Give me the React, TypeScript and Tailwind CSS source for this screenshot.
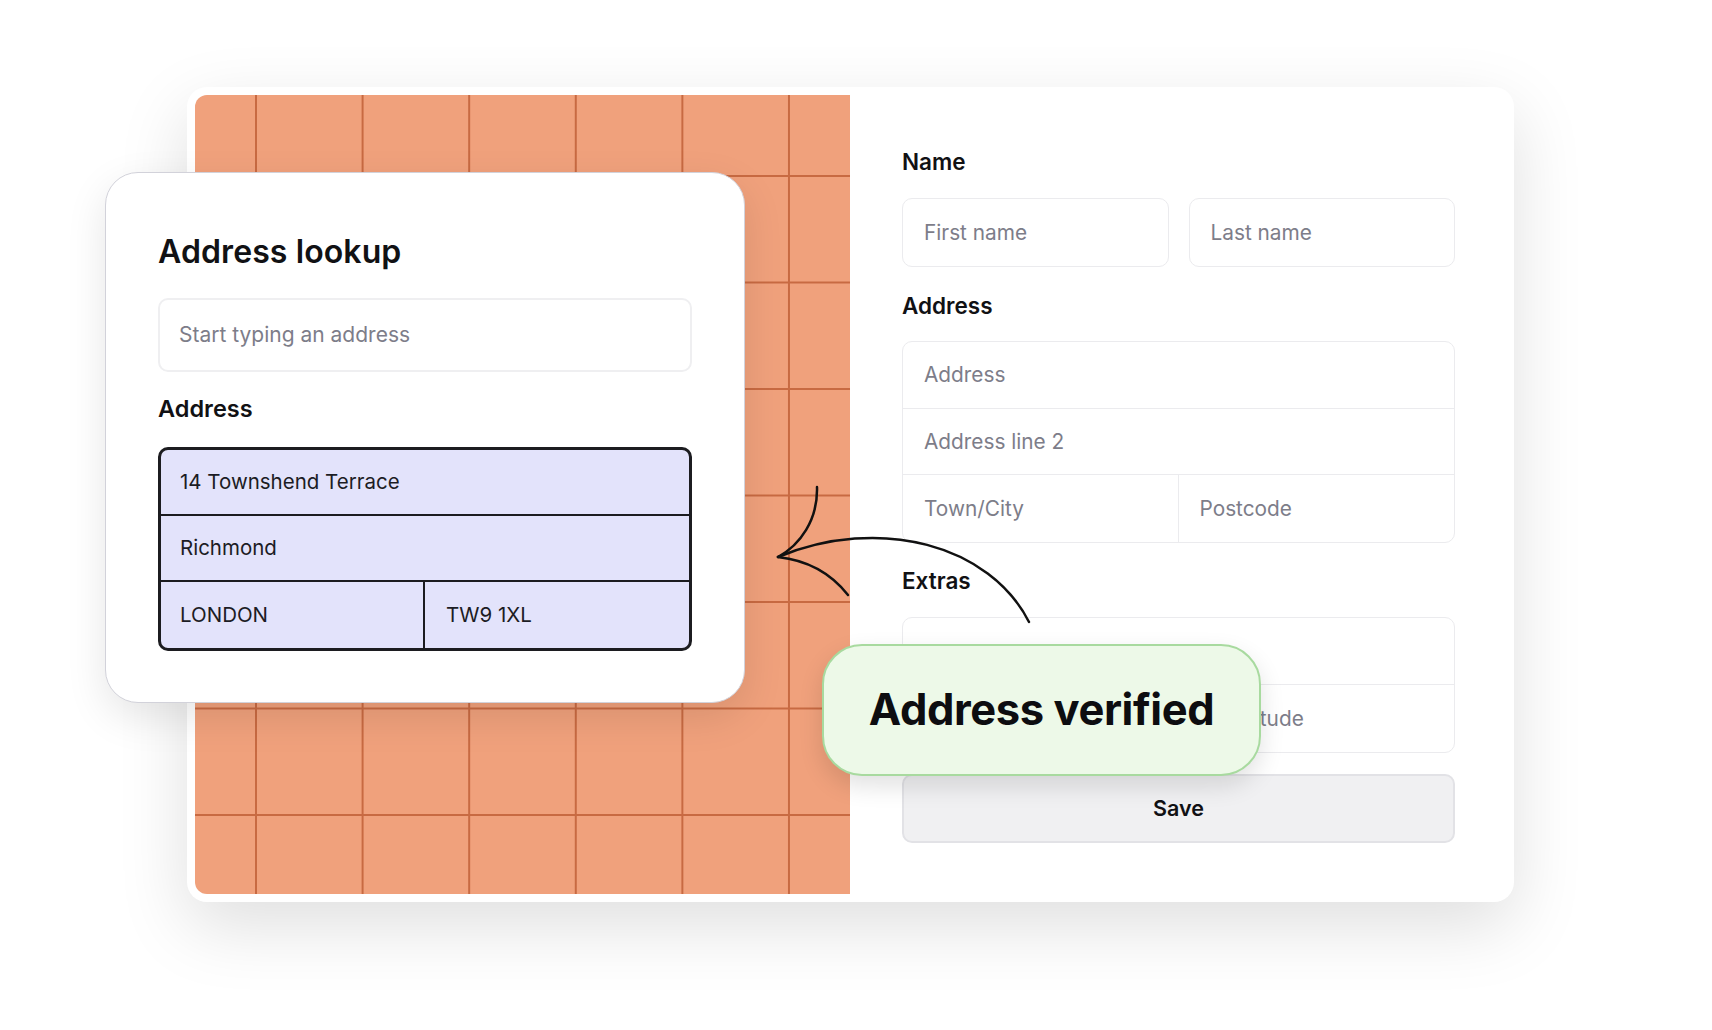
import React from 'react';

function Field({ text, className = '' }: { text?: string; className?: string }) {
    return (
        <div className={`flex items-center px-[21px] text-[20.8px] text-[#7d7d89] ${className}`}>
            {text}
        </div>
    );
}

function Label({ children }: { children: React.ReactNode }) {
    return <div className="h-[28px] leading-[28px] text-[22.5px] font-semibold text-[#111114]">{children}</div>;
}

function Arrow() {
    return (
        <svg className="absolute left-0 top-0 pointer-events-none" width="1712" height="1030" viewBox="0 0 1712 1030" fill="none">
            <g stroke="#111" strokeWidth="2.5" strokeLinecap="round" fill="none">
                <path d="M1029 622 C990 545 880 515 778 557" />
                <path d="M817 487 C818 520 800 545 778 557" />
                <path d="M778 557 C805 560 830 572 848 595" />
            </g>
        </svg>
    );
}

export default function App() {
    return (
        <div className="relative w-[1712px] h-[1030px] overflow-hidden bg-white font-['Inter',sans-serif] pl-[187px] pt-[87px]">
            {/* main panel */}
            <div className="w-[1327px] h-[815px] flex p-2 bg-white rounded-[20px] shadow-[0_24px_70px_rgba(0,0,0,0.13)]">
                <div className="w-[655px] h-full rounded-l-[12px] bg-[#f0a17c] bg-[linear-gradient(to_right,#c86a42_2px,transparent_2px),linear-gradient(to_bottom,#c86a42_2px,transparent_2px)] bg-size-[106.6px_106.5px] bg-position-[60px_80px]" />
                <div className="flex-1 flex flex-col pl-[52px] pr-[51px] pt-[53px]">
                    <Label>Name</Label>
                    <div className="mt-[22px] grid grid-cols-2 gap-[20px]">
                        <Field text="First name" className="h-[69px] border border-[#ebebee] rounded-[10px]" />
                        <Field text="Last name" className="h-[69px] border border-[#ebebee] rounded-[10px]" />
                    </div>
                    <div className="mt-[25px]">
                        <Label>Address</Label>
                    </div>
                    <div className="mt-[21px] border border-[#ebebee] rounded-[10px] flex flex-col">
                        <Field text="Address" className="h-[67px] border-b border-[#ebebee]" />
                        <Field text="Address line 2" className="h-[66px] border-b border-[#ebebee]" />
                        <div className="grid grid-cols-2 h-[67px]">
                            <Field text="Town/City" className="border-r border-[#ebebee]" />
                            <Field text="Postcode" />
                        </div>
                    </div>
                    <div className="mt-[24px]">
                        <Label>Extras</Label>
                    </div>
                    <div className="mt-[22px] border border-[#ebebee] rounded-[10px] flex flex-col">
                        <Field className="h-[67px] border-b border-[#ebebee]" />
                        <div className="grid grid-cols-2 h-[67px]">
                            <Field text="Latitude" className="border-r border-[#ebebee]" />
                            <Field text="Longitude" className="pl-[27px]" />
                        </div>
                    </div>
                    <button className="mt-[21px] h-[69px] rounded-[10px] bg-[#f0f0f2] border-2 border-[#e2e2e6] text-[21.5px] font-semibold text-[#111114]">
                        Save
                    </button>
                </div>
            </div>

            {/* address lookup card */}
            <div className="absolute left-[105px] top-[172px] w-[640px] h-[531px] bg-white rounded-[33px] border border-[#d2d2da] shadow-[0_14px_40px_rgba(0,0,0,0.10)] px-[52px] pt-[61px]">
                <h2 className="h-[36px] leading-[36px] text-[32px] font-semibold text-[#111114] tracking-[0.1px]">Address lookup</h2>
                <div className="mt-[28px] h-[74px] rounded-[10px] border-2 border-[#efeff1] flex items-center px-[19px] text-[21px] text-[#7d7d89]">
                    Start typing an address
                </div>
                <div className="mt-[23px] h-[28px] leading-[28px] text-[23.5px] font-semibold text-[#111114]">Address</div>
                <div className="mt-[24px] border-[3px] border-[#1c1c20] rounded-[10px] bg-[#e3e3fb] text-[20.5px] text-[#1c1c24] overflow-hidden">
                    <div className="h-[66px] flex items-center px-[19px] border-b-2 border-[#1c1c20]">14 Townshend Terrace</div>
                    <div className="h-[66px] flex items-center px-[19px] border-b-2 border-[#1c1c20]">Richmond</div>
                    <div className="h-[66px] grid grid-cols-2">
                        <div className="flex items-center px-[19px] border-r-2 border-[#1c1c20]">LONDON</div>
                        <div className="flex items-center px-[21px]">TW9 1XL</div>
                    </div>
                </div>
            </div>

            <Arrow />

            {/* verified badge */}
            <div className="absolute left-[822px] top-[644px] w-[439px] h-[132px] rounded-[40px] bg-[#edf9e8] border-2 border-[#a8da9f] shadow-[0_10px_24px_rgba(0,0,0,0.12)] flex items-center justify-center text-[43.5px] font-bold text-[#0d0d10] tracking-[-0.4px]">
                Address verified
            </div>
        </div>
    );
}
